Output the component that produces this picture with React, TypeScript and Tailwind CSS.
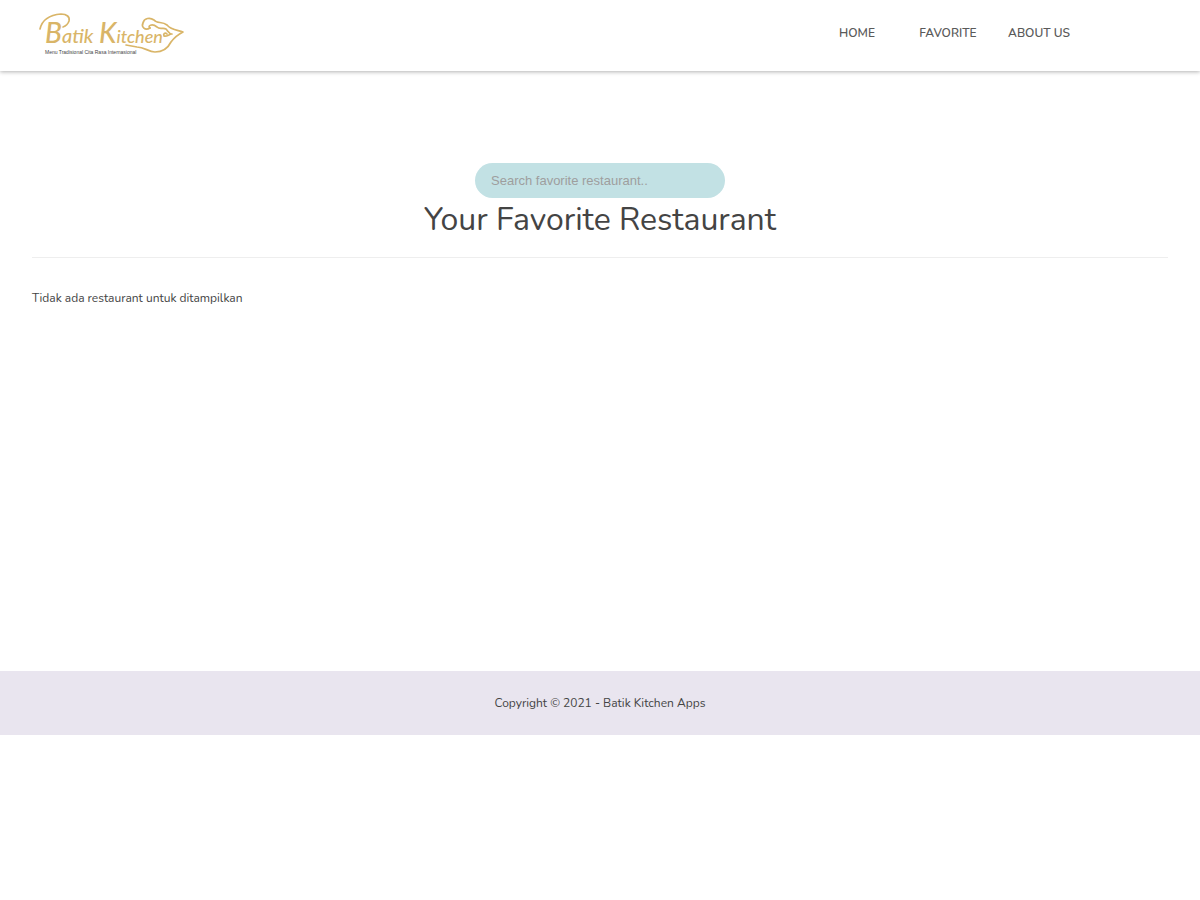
const links = [
  { label: 'HOME', href: '#/home', width: 'w-20' },
  { label: 'FAVORITE', href: '#/favorite', width: 'w-[102px]' },
  { label: 'ABOUT US', href: '#/about', width: 'w-20' },
];

function Logo() {
  return (
    <svg viewBox="0 0 148 44" className="h-11 w-[148px]" role="img" aria-label="Batik Kitchen">
      <g fill="none" stroke="#d9b568" strokeLinecap="round" strokeLinejoin="round" strokeWidth="1.7">
        <path d="M2 17C4 8 12 3 23 2C29 2 32 5 31 9C30 12 28 14 25 15" />
        <path d="M112 16C107 19 103 15 105 11C106 6 112 5 116 8C119 12 124 9 129 13C133 18 139 18 145 20C139 23 136 26 133 30C130 36 124 40 117 40C110 40 107 35 99 35L88 33" />
        <path d="M112 16C109 14 114 11 119 15C122 18 125 15 128 17C130 19 131 22 134 22C131 22 129 25 126 24C125 22 127 20 129 22" />
      </g>
      <g fill="#d9b568" className="font-['Lato'] font-medium italic">
        <text x="7" y="31" className="text-[20px]">
          <tspan className="text-[28px]">B</tspan>
          <tspan>atik</tspan>
        </text>
        <text x="61" y="31" className="text-[18px]">
          <tspan className="text-[28px]">K</tspan>
          <tspan>itchen</tspan>
        </text>
      </g>
      <text x="7" y="42" fill="#444444" className="font-['Liberation_Sans'] text-[5px]">Menu Tradisional Cita Rasa Internasional</text>
    </svg>
  );
}

export default function App() {
  return (
    <div className="bg-white font-['Nunito',sans-serif] text-xs text-[#444444]">
      <header className="flex h-[71px] items-start justify-between pl-[38px] pr-[121px] shadow-[0_1px_4px_rgba(0,0,0,0.3)]">
        <a href="#/home" className="mt-3 block">
          <Logo />
        </a>
        <nav className="mt-6 flex font-semibold leading-[18px] text-[#5a5a5a]">
          {links.map((link) => (
            <a key={link.label} href={link.href} className={`${link.width} text-center`}>
              {link.label}
            </a>
          ))}
        </nav>
      </header>

      <main className="min-h-[600px] px-8 pt-[92px]">
        <div className="flex justify-center">
          <input
            type="text"
            aria-label="Search favorite restaurant"
            placeholder="Search favorite restaurant.."
            className="h-[35px] w-[250px] rounded-full bg-[#c2e1e4] px-4 font-['Liberation_Sans',sans-serif] text-[13px] placeholder:text-[#9e9e9e]"
          />
        </div>
        <h1 className="border-b border-[#eeeeee] pb-4 text-center text-[32px] font-normal leading-[43px]">
          Your Favorite Restaurant
        </h1>
        <p className="mt-8 leading-4">Tidak ada restaurant untuk ditampilkan</p>
      </main>

      <footer className="bg-[#e9e5ef] py-6 text-center leading-4">
        Copyright © 2021 - Batik Kitchen Apps
      </footer>
    </div>
  );
}
